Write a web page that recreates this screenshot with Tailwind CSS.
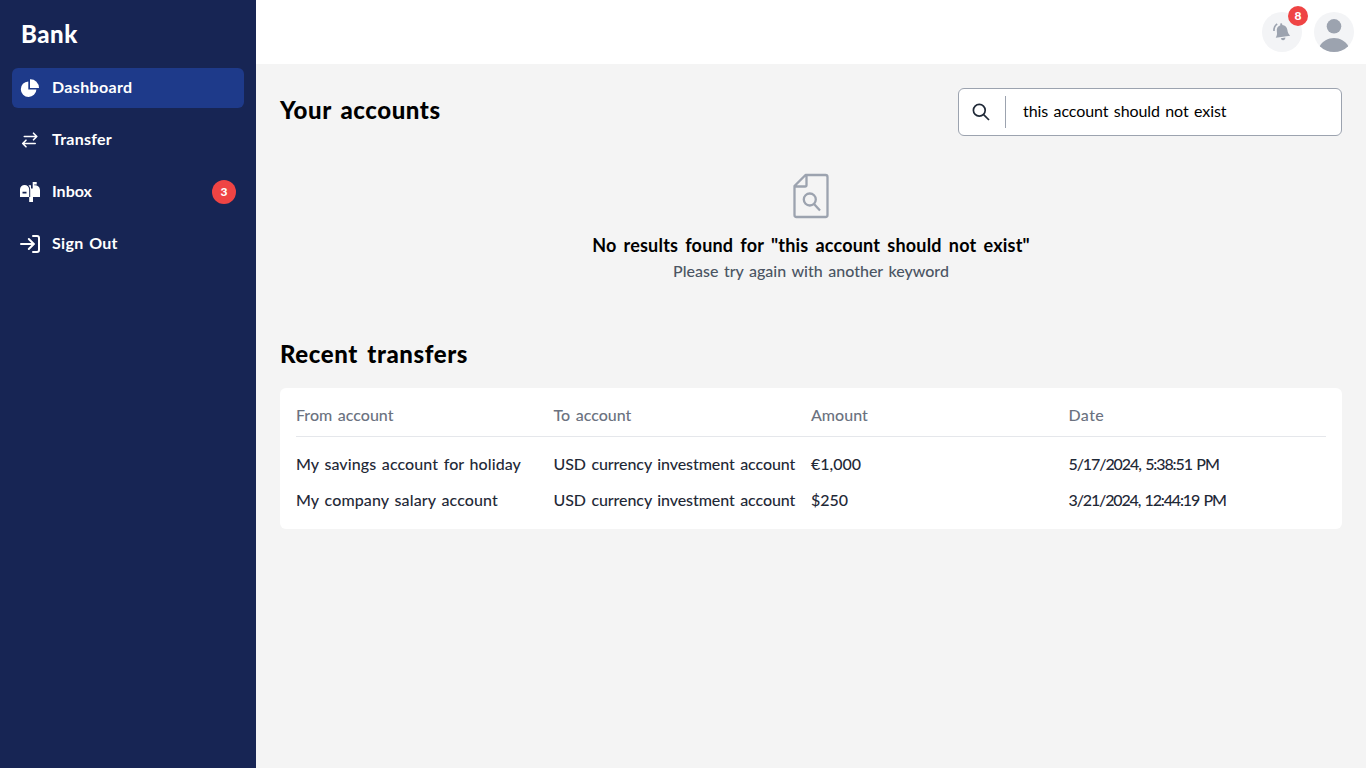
<!DOCTYPE html>
<html lang="en">
<head>
<meta charset="utf-8">
<title>Bank</title>
<script src="https://cdn.jsdelivr.net/npm/@tailwindcss/browser@4"></script>
</head>
<body class="flex h-screen overflow-hidden bg-[#f4f4f4] font-[Lato,sans-serif] text-base text-black">
<aside class="flex w-64 shrink-0 flex-col bg-[#172554] px-3 pt-4 text-white">
  <h1 class="mb-[14px] px-[9px] pt-[3px] pb-[5px] text-2xl leading-[30px] font-black tracking-[0.5px]">Bank</h1>
  <nav class="flex flex-col gap-3 font-bold">
    <a class="flex h-10 items-center gap-2 rounded-md bg-[#1e3a8a] px-2">
      <svg class="size-6 -ml-0.5" viewBox="0 0 24 24" fill="currentColor"><path d="M10.3 5.4a7.8 7.8 0 1 0 8.1 8.1h-8.1z"/><path d="M12 3.2a8.6 8.6 0 0 1 9 8.8h-9z"/></svg>
      <span class="ml-0.5 pb-0.5 leading-5 tracking-[0.35px]">Dashboard</span>
    </a>
    <a class="flex h-10 items-center gap-2 px-2">
      <svg class="size-6 -ml-0.5" viewBox="0 0 24 24" fill="none" stroke="currentColor" stroke-width="1.6" stroke-linecap="round" stroke-linejoin="round"><path d="M6.3 8.5h12.5M15.5 5.200l3.300 3.300-3.300 3.300M17.200 15.500H4.700M8 12.200l-3.300 3.300L8 18.800"/></svg>
      <span class="ml-0.5 pb-0.5 leading-5 tracking-[0.25px]">Transfer</span>
    </a>
    <a class="flex h-10 items-center gap-2 px-2">
      <svg class="size-6 -ml-0.5" viewBox="0 0 24 24" fill="currentColor"><path fill-rule="evenodd" d="M2 9.500a4.600 4.600 0 0 1 9.200 0V17H2zM4.500 11.800v1.800h4v-1.800z"/><path d="M10.500 5.300H13V8.500h1.700V2h4v2.600h-2.500v.7A5 5 0 0 1 22 10v7h-7v5h-3.800v-5h1V9.500A6 6 0 0 0 10.500 5.300z"/></svg>
      <span class="ml-0.5 pb-0.5 leading-5">Inbox</span>
      <span class="ml-auto flex size-6 items-center justify-center rounded-full bg-[#ef4444] pb-px text-xs font-black">3</span>
    </a>
    <a class="flex h-10 items-center gap-2 px-2">
      <svg class="size-6 -ml-0.5" viewBox="0 0 24 24" fill="none" stroke="currentColor" stroke-width="2" stroke-linecap="round" stroke-linejoin="round"><path d="M3 12h13M10.800 7l5 5-5 5M15 4h4a2 2 0 0 1 2 2v12a2 2 0 0 1-2 2h-4"/></svg>
      <span class="ml-0.5 pb-0.5 leading-5 tracking-[0.3px] [word-spacing:1.5px]">Sign Out</span>
    </a>
  </nav>
</aside>
<div class="flex min-w-0 grow flex-col">
  <header class="flex h-16 items-center justify-end gap-3 bg-white px-3">
    <div class="relative flex size-10 items-center justify-center rounded-full bg-[#f3f4f6] text-[#9ca3af]">
      <svg class="size-6" viewBox="0 0 24 24" fill="currentColor"><g transform="rotate(-8 12 12)"><path d="M12.300 3.200a1 1 0 0 1 1 1v.8c2.800.5 4.300 2.700 4.300 5.500 0 3 .6 4.500 2 6.300H5c1.400-1.800 2-3.300 2-6.300C7 7.700 8.500 5.500 11.300 5v-.8a1 1 0 0 1 1-1zM10 18h4.600a2.300 2.300 0 0 1-4.600 0z"/></g><path d="M4 11c-.2-3 .8-5.500 3.200-7" fill="none" stroke="currentColor" stroke-width="1.600"/></svg>
      <span class="absolute -top-1.5 -right-1.5 flex size-5 items-center justify-center rounded-full bg-[#ef4444] pb-px text-xs font-black text-white">8</span>
    </div>
    <div class="size-10 overflow-hidden rounded-full bg-[#f3f4f6] text-[#9ca3af]">
      <svg class="size-10" viewBox="0 0 40 40" fill="currentColor"><circle cx="20" cy="14.300" r="7.300"/><path d="M5.500 34.500C8.500 29 14 26 20 26s11.500 3 14.500 8.500L30 40H10z"/></svg>
    </div>
  </header>
  <main class="flex flex-col px-6 pt-6">
    <div class="flex h-12 items-center justify-between">
      <h2 class="pt-px pb-[5px] text-2xl leading-[26px] font-black tracking-[0.55px] [word-spacing:3px]">Your accounts</h2>
      <div class="flex h-12 w-96 items-center rounded-md border border-[#9ca3af] bg-white">
        <svg class="mr-[12px] ml-[10px] size-6 text-[#1f2937]" viewBox="0 0 24 24" fill="none" stroke="currentColor" stroke-width="1.700"><circle cx="10.300" cy="10.300" r="5.900"/><path d="M14.600 14.600l5.400 5.400"/></svg>
        <div class="h-8 border-l border-[#9ca3af]"></div>
        <span class="ml-[17px] pb-0.5 leading-5 tracking-[-0.1px] [word-spacing:1.5px]">this account should not exist</span>
      </div>
    </div>
    <section class="mt-9 flex flex-col items-center">
      <svg class="mb-3 size-12 text-[#9ca3af]" viewBox="0 0 48 48" fill="none" stroke="currentColor" stroke-width="2.300" stroke-linejoin="round"><path d="M18.500 3h20a2 2 0 0 1 2 2v38a2 2 0 0 1-2 2h-29a2 2 0 0 1-2-2V14zM19.500 3v10a1.500 1.500 0 0 1-1.500 1.500H7.500"/><circle cx="22.800" cy="27.500" r="6"/><path d="M27 32l6 6.500"/></svg>
      <h3 class="pt-px pb-[3px] text-lg leading-6 font-bold tracking-[0.2px] [word-spacing:2.5px]">No results found for "this account should not exist"</h3>
      <p class="pt-px pb-[3px] leading-5 font-medium text-[#4b5563] [word-spacing:1.5px]">Please try again with another keyword</p>
    </section>
    <h2 class="mt-14 pt-px pb-[5px] text-2xl leading-[26px] font-black tracking-[0.6px] [word-spacing:3px]">Recent transfers</h2>
    <section class="mt-4 rounded-md bg-white px-4 pt-[17px] pb-[15px] leading-5 font-medium text-[#1f2937] [word-spacing:1.5px]">
      <div class="mb-[17px] grid grid-cols-4 border-b border-[#e5e7eb] pb-[11px] text-[#6b7280]"><span>From account</span><span>To account</span><span>Amount</span><span class="tracking-[0.4px]">Date</span></div>
      <div class="mb-3 grid grid-cols-4 pb-1"><span class="tracking-[0.08px]">My savings account for holiday</span><span class="tracking-[-0.08px] whitespace-nowrap">USD currency investment account</span><span>€1,000</span><span class="tracking-[-1.1px]">5/17/2024, 5:38:51 PM</span></div>
      <div class="grid grid-cols-4 pb-1"><span class="tracking-[0.12px]">My company salary account</span><span class="tracking-[-0.08px] whitespace-nowrap">USD currency investment account</span><span>$250</span><span class="tracking-[-1.15px]">3/21/2024, 12:44:19 PM</span></div>
    </section>
  </main>
</div>
</body>
</html>
